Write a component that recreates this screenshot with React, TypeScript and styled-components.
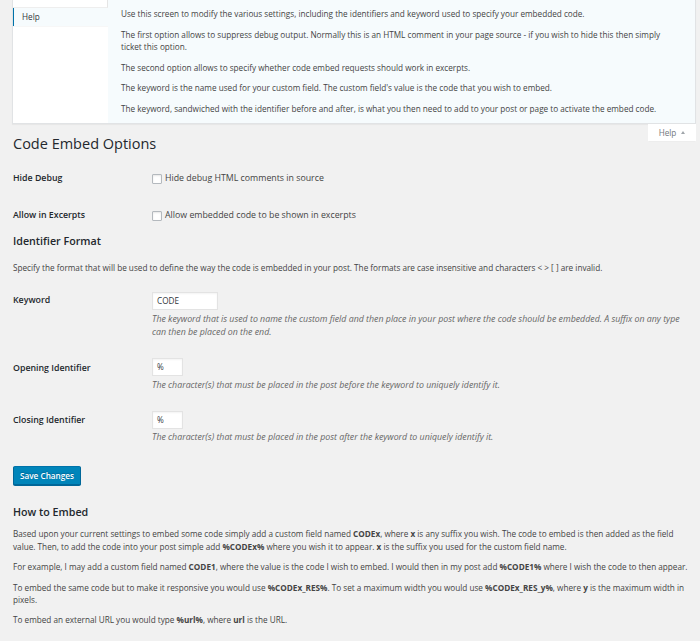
import React from "react";
import styled, { createGlobalStyle } from "styled-components";

const GlobalStyle = createGlobalStyle`
  html, body { margin: 0; padding: 0; background: #f1f1f1; }
  body {
    font-family: "Open Sans", "Liberation Sans", sans-serif;
    color: #444;
    font-size: 8.2px;
    line-height: 1.4;
  }
  * { box-sizing: border-box; }
`;

const Page = styled.div`
  padding: 0 4px 20px 12px;
`;

const HelpPanel = styled.div`
  display: grid;
  grid-template-columns: 95px 1fr;
  background: #fff;
  border: 1px solid #e1e3e5;
  border-top: none;
  box-shadow: 0 1px 1px rgba(0, 0, 0, 0.04);
`;

const HelpSidebar = styled.div`
  display: flex;
  flex-direction: column;
  background: #fff;
`;

const SidebarStub = styled.div`
  height: 8px;
  border-right: 1px solid #e5e5e5;
  border-bottom: 1px solid #eeeeee;
`;

const HelpTabItem = styled.div<{ $active?: boolean }>`
  height: 18px;
  display: flex;
  align-items: center;
  padding-left: 8px;
  font-size: 8.2px;
  color: #32373c;
  background: ${(p) => (p.$active ? "#f6fbfd" : "#fff")};
  border-left: ${(p) => (p.$active ? "1.5px solid #0073aa" : "none")};
  box-shadow: 0 1px 0 rgba(0, 0, 0, 0.03);
`;

const HelpContent = styled.div`
  background: #f6fbfd;
  padding: 0.1px 22px 0.1px 13px;
`;

const HelpPara = styled.p`
  margin: 8.2px 0;
  font-size: 8.2px;
  line-height: 12.3px;
  color: #444;
`;

const HeaderRow = styled.div`
  display: flex;
  justify-content: space-between;
  align-items: flex-start;
`;

const PageTitle = styled.h1`
  margin: 10px 0 0 1px;
  font-size: 14.5px;
  line-height: 19px;
  font-weight: 400;
  color: #23282d;
`;

const HelpToggle = styled.div`
  height: 17px;
  width: 48px;
  display: flex;
  align-items: center;
  justify-content: center;
  gap: 5px;
  background: #fff;
  color: #72777c;
  font-size: 8.2px;
  box-shadow: 0 1px 1px -1px rgba(0, 0, 0, 0.1);
`;

const UpArrow = styled.span`
  width: 0;
  height: 0;
  border-left: 2.5px solid transparent;
  border-right: 2.5px solid transparent;
  border-bottom: 3px solid #a0a5aa;
  margin-top: -1px;
`;

const FormTable = styled.div<{ $top: number }>`
  margin-top: ${(p) => p.$top}px;
  margin-left: 1px;
  display: flex;
  flex-direction: column;
`;

const FormRow = styled.div`
  display: grid;
  grid-template-columns: 139px 1fr;
`;

const RowLabel = styled.div<{ $pad?: number }>`
  padding: ${(p) => p.$pad ?? 12.6}px 0 12.6px;
  font-size: 8.8px;
  line-height: 11.5px;
  font-weight: 600;
  color: #23282d;
`;

const RowField = styled.div`
  padding: 9.5px 12px 9.5px 0;
`;

const CheckLine = styled.label`
  height: 18px;
  display: flex;
  align-items: center;
  gap: 3px;
  font-size: 8.8px;
  color: #444;
`;

const CheckBox = styled.span`
  width: 10px;
  height: 10px;
  background: #fff;
  border: 1px solid #b4b9be;
  border-radius: 1px;
  box-shadow: inset 0 1px 2px rgba(0, 0, 0, 0.1);
`;

const TextInput = styled.div<{ $w: number }>`
  width: ${(p) => p.$w}px;
  height: 18px;
  background: #fff;
  border: 1px solid #e3e3e3;
  box-shadow: inset 0 1px 2px rgba(0, 0, 0, 0.05);
  display: flex;
  align-items: center;
  padding: 0 4px;
  font-size: 8.2px;
  color: #32373c;
`;

const Description = styled.p`
  margin: 2.5px 0 0;
  font-size: 8.8px;
  line-height: 13.3px;
  font-style: italic;
  color: #666;
`;

const SectionTitle = styled.h2<{ $top: number; $bottom: number }>`
  margin: ${(p) => p.$top}px 0 ${(p) => p.$bottom}px 1px;
  font-size: 10.7px;
  line-height: 14px;
  font-weight: 600;
  color: #23282d;
`;

const BodyPara = styled.p<{ $top?: number }>`
  margin: ${(p) => p.$top ?? 8.2}px 0 8.2px 1px;
  font-size: 8.2px;
  line-height: 12.3px;
  color: #444;
  & strong { font-weight: 700; color: #444; }
`;

const PrimaryButton = styled.button`
  margin: 11.3px 0 0 1px;
  height: 19px;
  padding: 0 6px;
  background: #0085ba;
  border: 1px solid #0073aa;
  border-color: #0073aa #006799 #006799;
  border-radius: 2px;
  box-shadow: 0 1px 0 #006799;
  color: #fff;
  font-family: "Open Sans", "Liberation Sans", sans-serif;
  font-size: 8.2px;
  font-weight: 600;
  text-shadow: 0 -1px 1px #006799;
  cursor: pointer;
`;

export default function App() {
  return (
    <>
      <GlobalStyle />
      <Page>
        <HelpPanel>
          <HelpSidebar>
            <SidebarStub />
            <HelpTabItem $active>Help</HelpTabItem>
          </HelpSidebar>
          <HelpContent>
            <HelpPara>
              Use this screen to modify the various settings, including the identifiers and keyword used to specify your embedded code.
            </HelpPara>
            <HelpPara>
              The first option allows to suppress debug output. Normally this is an HTML comment in your page source - if you wish to hide this then simply ticket this option.
            </HelpPara>
            <HelpPara>The second option allows to specify whether code embed requests should work in excerpts.</HelpPara>
            <HelpPara>
              The keyword is the name used for your custom field. The custom field's value is the code that you wish to embed.
            </HelpPara>
            <HelpPara>
              The keyword, sandwiched with the identifier before and after, is what you then need to add to your post or page to activate the embed code.
            </HelpPara>
          </HelpContent>
        </HelpPanel>

        <HeaderRow>
          <PageTitle>Code Embed Options</PageTitle>
          <HelpToggle>
            Help <UpArrow />
          </HelpToggle>
        </HeaderRow>

        <FormTable $top={7}>
          <FormRow>
            <RowLabel>Hide Debug</RowLabel>
            <RowField>
              <CheckLine>
                <CheckBox />
                Hide debug HTML comments in source
              </CheckLine>
            </RowField>
          </FormRow>
          <FormRow>
            <RowLabel>Allow in Excerpts</RowLabel>
            <RowField>
              <CheckLine>
                <CheckBox />
                Allow embedded code to be shown in excerpts
              </CheckLine>
            </RowField>
          </FormRow>
        </FormTable>

        <SectionTitle $top={0} $bottom={14}>Identifier Format</SectionTitle>
        <BodyPara $top={0}>
          Specify the format that will be used to define the way the code is embedded in your post. The formats are case insensitive and characters &lt; &gt; [ ] are invalid.
        </BodyPara>

        <FormTable $top={0}>
          <FormRow>
            <RowLabel>Keyword</RowLabel>
            <RowField>
              <TextInput $w={66}>CODE</TextInput>
              <Description>
                The keyword that is used to name the custom field and then place in your post where the code should be embedded. A suffix on any type can then be placed on the end.
              </Description>
            </RowField>
          </FormRow>
          <FormRow>
            <RowLabel $pad={14}>Opening Identifier</RowLabel>
            <RowField>
              <TextInput $w={31}>%</TextInput>
              <Description>
                The character(s) that must be placed in the post before the keyword to uniquely identify it.
              </Description>
            </RowField>
          </FormRow>
          <FormRow>
            <RowLabel $pad={14}>Closing Identifier</RowLabel>
            <RowField>
              <TextInput $w={31}>%</TextInput>
              <Description>
                The character(s) that must be placed in the post after the keyword to uniquely identify it.
              </Description>
            </RowField>
          </FormRow>
        </FormTable>

        <PrimaryButton type="button">Save Changes</PrimaryButton>

        <SectionTitle $top={20} $bottom={0}>How to Embed</SectionTitle>
        <BodyPara $top={9.8}>
          Based upon your current settings to embed some code simply add a custom field named <strong>CODEx</strong>, where <strong>x</strong> is any suffix you wish. The code to embed is then added as the field value. Then, to add the code into your post simple add <strong>%CODEx%</strong> where you wish it to appear. <strong>x</strong> is the suffix you used for the custom field name.
        </BodyPara>
        <BodyPara>
          For example, I may add a custom field named <strong>CODE1</strong>, where the value is the code I wish to embed. I would then in my post add <strong>%CODE1%</strong> where I wish the code to then appear.
        </BodyPara>
        <BodyPara>
          To embed the same code but to make it responsive you would use <strong>%CODEx_RES%</strong>. To set a maximum width you would use <strong>%CODEx_RES_y%</strong>, where <strong>y</strong> is the maximum width in pixels.
        </BodyPara>
        <BodyPara>
          To embed an external URL you would type <strong>%url%</strong>, where <strong>url</strong> is the URL.
        </BodyPara>
      </Page>
    </>
  );
}
